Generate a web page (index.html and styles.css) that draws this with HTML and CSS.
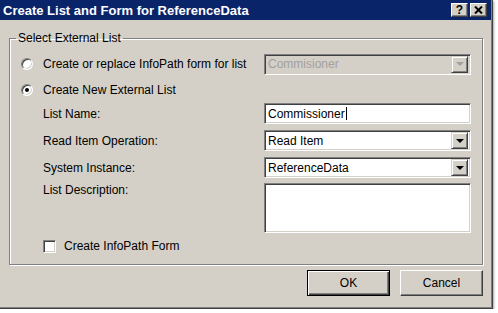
FILE: index.html
```html
<!DOCTYPE html>
<html lang="en">
<head>
  <meta charset="UTF-8"/>
  <title>Create List and Form for ReferenceData</title>
  <link rel="stylesheet" href="styles.css">
</head>
<body>
<div class="dialog">
  <div class="titlebar">
    <span class="title">Create List and Form for ReferenceData</span>
    <div class="caption-buttons">
      <span class="cap-btn">?</span>
      <span class="cap-btn">
        <svg width="9" height="8" viewBox="0 0 9 8"><path d="M1 0.5 L8 7.5 M8 0.5 L1 7.5" stroke="#000" stroke-width="2"/></svg>
      </span>
    </div>
  </div>

  <fieldset class="group">
    <legend>Select External List</legend>
    <div class="group-body">
      <div class="row first">
        <label class="option"><span class="radio"></span>Create or replace InfoPath form for list</label>
        <div class="field combo disabled">
          <span class="field-text">Commisioner</span>
          <span class="drop"><span class="arrow"></span></span>
        </div>
      </div>

      <div class="row option-row">
        <label class="option"><span class="radio checked"></span>Create New External List</label>
      </div>

      <div class="row sub">
        <span>List Name:</span>
        <div class="field"><span class="field-text">Commissioner</span><span class="caret"></span></div>
      </div>
      <div class="row sub">
        <span>Read Item Operation:</span>
        <div class="field combo">
          <span class="field-text">Read Item</span>
          <span class="drop"><span class="arrow"></span></span>
        </div>
      </div>
      <div class="row sub">
        <span>System Instance:</span>
        <div class="field combo">
          <span class="field-text">ReferenceData</span>
          <span class="drop"><span class="arrow"></span></span>
        </div>
      </div>
      <div class="row sub top">
        <span class="desc-label">List Description:</span>
        <div class="field memo"></div>
      </div>

      <div class="row sub check-row">
        <label class="option"><span class="checkbox"></span>Create InfoPath Form</label>
      </div>
    </div>
  </fieldset>

  <div class="buttons">
    <button class="btn default">OK</button>
    <button class="btn">Cancel</button>
  </div>
</div>
</body>
</html>
```

FILE: styles.css
```css
body {
  margin: 0;
  background: #fff;
  font-family: 'Liberation Sans', Arial, sans-serif;
  font-size: 12px;
  color: #000;
}

.dialog {
  width: 493px;
  height: 309px;
  box-sizing: border-box;
  background: #d4d0c8;
  border-right: 1px solid #404040;
  border-bottom: 1px solid #404040;
  box-shadow: inset -1px -1px 0 #808080, 1px 1px 2px rgba(0, 0, 0, 0.35);
  display: flex;
  flex-direction: column;
}

.titlebar {
  height: 20px;
  margin-right: 1px;
  padding: 0 4px 0 3px;
  background: #0a246a;
  color: #fff;
  display: flex;
  justify-content: space-between;
  align-items: center;
}

.title {
  font-weight: bold;
  font-size: 13px;
}

.caption-buttons {
  display: flex;
  gap: 2px;
}

.cap-btn {
  width: 17px;
  height: 14px;
  box-sizing: border-box;
  background: #d4d0c8;
  border: 1px solid;
  border-color: #fff #404040 #404040 #fff;
  box-shadow: inset -1px -1px 0 #808080;
  color: #000;
  font-weight: bold;
  font-size: 12px;
  line-height: 12px;
  display: flex;
  align-items: center;
  justify-content: center;
}

.group {
  margin: 11px 9px 0 9px;
  padding: 8px 11px 11px 6px;
  border: 1px solid #808080;
  box-shadow: 1px 1px 0 #fff, inset 1px 1px 0 #fff;
  min-inline-size: 0;
}

.group legend {
  padding: 0 2px;
  line-height: 14px;
}

.group-body {
  padding-left: 5px;
  display: flex;
  flex-direction: column;
}

.row {
  display: flex;
  justify-content: space-between;
  align-items: center;
}

.row.first {
  height: 22px;
}

.row.option-row {
  height: 16px;
  margin-top: 7px;
}

.row.sub {
  padding-left: 22px;
  margin-top: 6px;
}

.row.option-row + .row.sub {
  margin-top: 5px;
}

.row.top {
  align-items: flex-start;
  margin-top: 5px;
}

.desc-label {
  line-height: 14px;
}

.row.check-row {
  height: 14px;
}

.option {
  display: flex;
  align-items: center;
}

.radio {
  width: 12px;
  height: 12px;
  box-sizing: border-box;
  border-radius: 50%;
  background: #fff;
  border: 1px solid;
  border-color: #808080 #fff #fff #808080;
  box-shadow: inset 1px 1px 0 #404040, inset -1px -1px 0 #d4d0c8;
  margin-right: 10px;
  display: flex;
  align-items: center;
  justify-content: center;
}

.radio.checked::after {
  content: '';
  width: 4px;
  height: 4px;
  border-radius: 50%;
  background: #000;
}

.checkbox {
  width: 13px;
  height: 13px;
  box-sizing: border-box;
  background: #fff;
  border: 1px solid;
  border-color: #808080 #fff #fff #808080;
  box-shadow: inset 1px 1px 0 #404040, inset -1px -1px 0 #d4d0c8;
  margin-right: 8px;
}

.field {
  width: 207px;
  height: 21px;
  box-sizing: border-box;
  background: #fff;
  border: 1px solid;
  border-color: #808080 #fff #fff #808080;
  box-shadow: inset 1px 1px 0 #404040, inset -1px -1px 0 #d4d0c8;
  padding: 2px;
  display: flex;
  align-items: center;
}

.field-text {
  padding-left: 1px;
}

.caret {
  width: 0;
  height: 13px;
  border-left: 1px solid #000;
  margin-left: 1px;
}

.combo.disabled {
  background: #d4d0c8;
  color: #a0a0a0;
}

.drop {
  margin-left: auto;
  width: 17px;
  height: 17px;
  box-sizing: border-box;
  background: #d4d0c8;
  border: 1px solid;
  border-color: #d4d0c8 #404040 #404040 #d4d0c8;
  box-shadow: inset 1px 1px 0 #fff, inset -1px -1px 0 #808080;
  display: flex;
  align-items: center;
  justify-content: center;
}

.arrow {
  width: 0;
  height: 0;
  border-left: 4px solid transparent;
  border-right: 4px solid transparent;
  border-top: 4px solid #000;
}

.disabled .arrow {
  border-top-color: #a0a0a0;
}

.field.memo {
  height: 50px;
}

.buttons {
  display: flex;
  justify-content: flex-end;
  gap: 10px;
  margin: 5px 9px 0 0;
}

.btn {
  width: 83px;
  height: 26px;
  box-sizing: border-box;
  background: #d4d0c8;
  border: 1px solid;
  border-color: #fff #404040 #404040 #fff;
  box-shadow: inset -1px -1px 0 #808080;
  font-family: 'Liberation Sans', Arial, sans-serif;
  font-size: 12px;
  color: #000;
  padding: 0;
}

.btn.default {
  border: 1px solid #000;
  box-shadow: inset 1px 1px 0 #fff, inset -1px -1px 0 #404040, inset -2px -2px 0 #808080;
}
```
